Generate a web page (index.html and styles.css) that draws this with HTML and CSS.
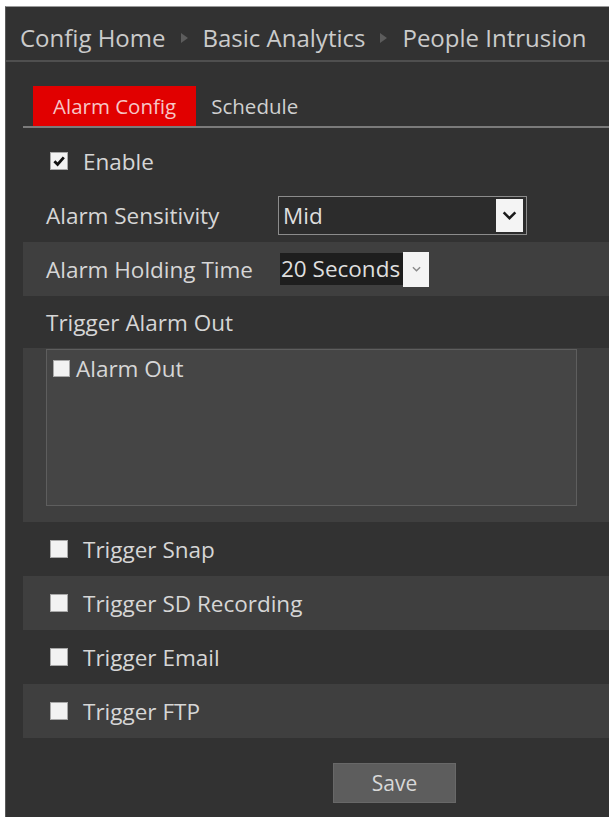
FILE: index.html
```html
<!DOCTYPE html>
<html>
<head>
<meta charset="utf-8">
<link rel="stylesheet" href="styles.css">
</head>
<body>
<div class="panel">
  <div class="crumbs">
    <span class="crumb">Config Home</span>
    <span class="sep"></span>
    <span class="crumb">Basic Analytics</span>
    <span class="sep"></span>
    <span class="crumb">People Intrusion</span>
  </div>
  <div class="tabs">
    <div class="tab active">Alarm Config</div>
    <div class="tab">Schedule</div>
  </div>
  <div class="content">
    <div class="row check-row">
      <span class="cb checked"><svg viewBox="0 0 16 16" width="16" height="16"><path d="M3.4 8.2 L6.6 11.4 L12.8 4.4" fill="none" stroke="#111" stroke-width="2.8"/></svg></span>
      <span class="lbl">Enable</span>
    </div>
    <div class="row">
      <span class="field-label">Alarm Sensitivity</span>
      <div class="select wide">
        <span class="sel-text">Mid</span>
        <span class="arrow big"><svg viewBox="0 0 16 10" width="15" height="9"><path d="M1.5 1.5 L8 8 L14.5 1.5" fill="none" stroke="#1a1a1a" stroke-width="2.8"/></svg></span>
      </div>
    </div>
    <div class="row alt">
      <span class="field-label">Alarm Holding Time</span>
      <div class="select compact">
        <span class="sel-text dark">20 Seconds</span>
        <span class="arrow small"><svg viewBox="0 0 10 6" width="9" height="6"><path d="M1 1 L5 5 L9 1" fill="none" stroke="#8a8a8a" stroke-width="1.6"/></svg></span>
      </div>
    </div>
    <div class="row short">
      <span class="field-label">Trigger Alarm Out</span>
    </div>
    <div class="box-wrap alt">
      <div class="box">
        <div class="box-item">
          <span class="cb sm"></span>
          <span class="lbl">Alarm Out</span>
        </div>
      </div>
    </div>
    <div class="row check-row">
      <span class="cb"></span>
      <span class="lbl">Trigger Snap</span>
    </div>
    <div class="row check-row alt">
      <span class="cb"></span>
      <span class="lbl">Trigger SD Recording</span>
    </div>
    <div class="row check-row">
      <span class="cb"></span>
      <span class="lbl">Trigger Email</span>
    </div>
    <div class="row check-row alt">
      <span class="cb"></span>
      <span class="lbl">Trigger FTP</span>
    </div>
    <div class="actions">
      <button class="save">Save</button>
    </div>
  </div>
</div>
</body>
</html>
```

FILE: styles.css
```css
html, body {
  margin: 0;
  padding: 0;
  background: #ffffff;
}
body {
  font-family: "Open Sans", "Noto Sans", sans-serif;
  color: #d6d6d6;
}
.panel {
  margin: 6px 0 0 5px;
  min-height: 810px;
  background: #323232;
  border-top: 1px solid #9a9a9a;
  border-left: 1px solid #5a5a5a;
}
.crumbs {
  height: 55px;
  box-sizing: border-box;
  padding: 8px 0 0 14px;
  display: flex;
  align-items: center;
  border-bottom: 2px solid #4f4f4f;
  font-size: 24px;
  color: #cbcbcb;
  white-space: nowrap;
}
.sep {
  width: 0;
  height: 0;
  border-top: 5px solid transparent;
  border-bottom: 5px solid transparent;
  border-left: 7px solid #5c5c5c;
  margin: 0 15px 0 15px;
}
.tabs {
  margin: 24px 0 0 17px;
  padding-left: 10px;
  display: flex;
  border-bottom: 2px solid #7b7b7b;
}
.tab {
  height: 40px;
  display: flex;
  align-items: center;
  padding: 0 15px;
  font-size: 20.5px;
  color: #d0d0d0;
}
.tab.active {
  background: #e10000;
  color: #f6c6c6;
  padding: 0 20px;
}
.content {
  margin-left: 17px;
  padding-top: 6px;
}
.row {
  height: 54px;
  display: flex;
  align-items: center;
  padding-left: 23px;
  font-size: 22.5px;
}
.row.short {
  height: 52px;
}
.alt {
  background: #3f3f3f;
}
.check-row {
  padding-left: 27px;
}
.cb {
  width: 18px;
  height: 18px;
  box-sizing: border-box;
  background: #f2f2f2;
  border: 1px solid #a8a8a8;
  margin-right: 15px;
  display: flex;
  align-items: center;
  justify-content: center;
  flex-shrink: 0;
}
.cb svg {
  display: block;
}
.cb.sm {
  width: 17px;
  height: 17px;
  margin-right: 6px;
}
.field-label {
  width: 232px;
}
.select {
  display: flex;
  align-items: center;
  box-sizing: border-box;
}
.select.wide {
  width: 249px;
  height: 39px;
  border: 1px solid #8c8c8c;
  background: #2c2c2c;
  padding: 0 3px 0 4px;
  justify-content: space-between;
}
.sel-text {
  font-size: 22.5px;
  color: #dedede;
}
.arrow {
  background: #f4f4f4;
  display: flex;
  align-items: center;
  justify-content: center;
}
.arrow.big {
  width: 27px;
  height: 33px;
}
.select.compact {
  margin-left: 2px;
}
.sel-text.dark {
  background: #1e1e1e;
  height: 32px;
  line-height: 32px;
  padding: 0 3px 0 1px;
}
.arrow.small {
  width: 26px;
  height: 35px;
}
.arrow svg {
  display: block;
}
.box-wrap {
  padding: 1px 32px 16px 23px;
}
.box {
  height: 157px;
  box-sizing: border-box;
  background: #454545;
  border: 1px solid #5e5e5e;
  padding: 7px 6px;
}
.box-item {
  display: flex;
  align-items: center;
  font-size: 22.5px;
  height: 22px;
}
.actions {
  padding: 25px 0 0 310px;
}
.save {
  width: 123px;
  height: 40px;
  background: #5d5d5d;
  border: 1px solid #686868;
  color: #d8d8d8;
  font-family: "Open Sans", "Noto Sans", sans-serif;
  font-size: 21px;
  padding: 0;
}
```
